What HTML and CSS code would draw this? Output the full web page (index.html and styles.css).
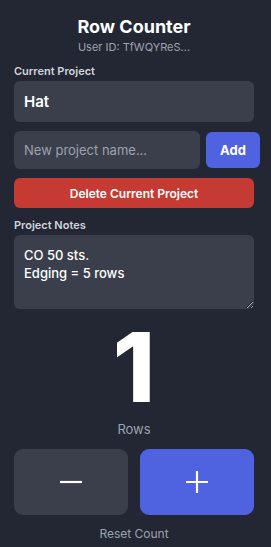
FILE: index.html
```
<!DOCTYPE html>
<html>
<head>
<meta charset="utf-8">
<link rel="stylesheet" href="styles.css">
</head>
<body>
<div class="app">
  <header class="head">
    <h1 class="title">Row Counter</h1>
    <p class="uid">User ID: TfWQYReS...</p>
  </header>
  <label class="label">Current Project</label>
  <div class="select">Hat</div>
  <div class="addrow">
    <input class="newinput" type="text" placeholder="New project name...">
    <button class="addbtn">Add</button>
  </div>
  <button class="delbtn">Delete Current Project</button>
  <label class="label notes-label">Project Notes</label>
  <textarea class="notes">CO 50 sts.
Edging = 5 rows</textarea>
  <div class="count">1</div>
  <div class="rows">Rows</div>
  <div class="btns">
    <button class="big minus"><svg width="26" height="26" viewBox="0 0 26 26"><path d="M2 13H24" stroke="#fff" stroke-width="2.2"/></svg></button>
    <button class="big plus"><svg width="26" height="26" viewBox="0 0 26 26"><path d="M2 13H24M13 2V24" stroke="#fff" stroke-width="2.2"/></svg></button>
  </div>
  <div class="reset">Reset Count</div>
</div>
</body>
</html>
```
FILE: styles.css
```
* { box-sizing: border-box; }
html, body { margin: 0; padding: 0; background: #222733; }
body { font-family: Inter, "Noto Sans", sans-serif; color: #fff; }
.app { width: 271px; padding: 16px 17px 0 14px; }
.head { text-align: center; }
.title { margin: 0; font-size: 18px; font-weight: 700; line-height: 22px; }
.uid { margin: 2px 0 0; font-size: 11px; color: #9ca3af; line-height: 14px; }
.label { display: block; margin-top: 10px; font-size: 11px; font-weight: 600; color: #d1d5db; line-height: 14px; }
.select { margin-top: 3px; height: 41px; background: #3b3f4c; border-radius: 6px; padding: 0 10px; display: flex; align-items: center; font-size: 15px; font-weight: 600; }
.addrow { display: flex; align-items: center; gap: 6px; margin-top: 9px; }
.newinput { flex: none; width: 186px; height: 38px; background: #3b3f4c; border: none; border-radius: 6px; padding: 0 10px; font-family: inherit; font-size: 13px; color: #fff; outline: none; }
.newinput::placeholder { color: #9ca3af; }
.addbtn { flex: none; width: 54px; height: 36px; background: #4f63e0; border: none; border-radius: 6px; color: #fff; font-family: inherit; font-size: 13px; font-weight: 700; }
.delbtn { display: block; width: 100%; margin-top: 9px; height: 30px; background: #c53a33; border: none; border-radius: 6px; color: #fff; font-family: inherit; font-size: 12px; font-weight: 600; }
.notes-label { margin-top: 10px; }
.notes { display: block; width: 100%; margin-top: 3px; height: 74px; background: #3b3f4c; border: none; border-radius: 6px; padding: 11px 10px 8px; font-family: inherit; font-size: 13px; font-weight: 500; line-height: 18px; color: #fff; resize: vertical; outline: none; }
.count { text-align: center; font-size: 96px; font-weight: 800; line-height: 88px; margin-top: 14px; }
.rows { text-align: center; font-size: 13px; color: #9ca3af; margin-top: 10px; line-height: 16px; }
.btns { display: grid; grid-template-columns: 1fr 1fr; gap: 12px; margin-top: 12px; }
.big { height: 66px; border: none; border-radius: 9px; display: flex; align-items: center; justify-content: center; }
.minus { background: #3b3f4c; }
.plus { background: #4f63e0; }
.reset { text-align: center; font-size: 12px; color: #9ca3af; margin-top: 11px; }
```
